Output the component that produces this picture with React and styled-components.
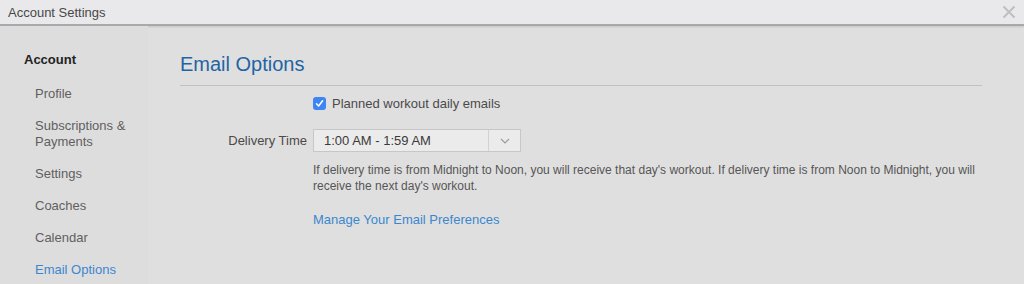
import React, { useState } from 'react';
import styled, { createGlobalStyle } from 'styled-components';

const GlobalStyle = createGlobalStyle`
  html, body {
    margin: 0;
    padding: 0;
    background: #dfdede;
    font-family: "Liberation Sans", Arial, Helvetica, sans-serif;
  }
`;

const Window = styled.div`
  width: 1024px;
  height: 284px;
  overflow: hidden;
  display: flex;
  flex-direction: column;
  background: #e0dfdf;
`;

const TitleBar = styled.div`
  height: 24px;
  flex: 0 0 24px;
  display: flex;
  align-items: center;
  justify-content: space-between;
  padding: 0 8px;
  background: #e9e9eb;
  border-bottom: 2px solid #a9a9ab;
  box-shadow: 0 1px 2px rgba(0, 0, 0, 0.12);
  font-size: 13px;
  color: #484848;
`;

const CloseButton = styled.button`
  border: none;
  background: none;
  padding: 0;
  width: 14px;
  height: 14px;
  display: flex;
  cursor: pointer;
`;

const Body = styled.div`
  flex: 1;
  display: flex;
`;

const Sidebar = styled.nav`
  width: 148px;
  flex: 0 0 148px;
  padding: 26px 0 0 24px;
  box-sizing: border-box;
  background: #dedddd;
`;

const SideHeading = styled.div`
  font-size: 13px;
  font-weight: bold;
  color: #222;
  line-height: 16px;
  margin-bottom: 18px;
`;

const SideItem = styled.div`
  font-size: 13px;
  line-height: 16px;
  padding-left: 11px;
  margin-bottom: 16px;
  color: ${(p) => (p.$active ? '#3a87d0' : '#5f5f5f')};
  cursor: pointer;
`;

const Main = styled.main`
  flex: 1;
  padding: 25px 42px 0 32px;
`;

const Heading = styled.h1`
  margin: 0;
  font-size: 20px;
  font-weight: normal;
  color: #1e64a4;
  line-height: 26px;
  padding-bottom: 8px;
  border-bottom: 1px solid #c2c1c1;
`;

const Form = styled.div`
  display: grid;
  grid-template-columns: 127px 1fr;
  column-gap: 6px;
  padding-top: 9px;
`;

const Label = styled.label`
  font-size: 13px;
  color: #4a4a4a;
  text-align: right;
  align-self: center;
`;

const CheckRow = styled.label`
  grid-column: 2;
  display: flex;
  align-items: center;
  gap: 6px;
  font-size: 13px;
  color: #4a4a4a;
  height: 16px;
  cursor: pointer;
`;

const Box = styled.span`
  width: 13px;
  height: 13px;
  border-radius: 3px;
  background: ${(p) => (p.$checked ? '#3d85f2' : '#fff')};
  border: ${(p) => (p.$checked ? 'none' : '1px solid #aaa')};
  box-sizing: border-box;
  display: flex;
  align-items: center;
  justify-content: center;
`;

const Select = styled.div`
  margin-top: 18px;
  width: 208px;
  height: 23px;
  box-sizing: border-box;
  border: 1px solid #c8c7c7;
  background: #ecebeb;
  display: flex;
  font-size: 13px;
  color: #3a3a3a;
`;

const SelectText = styled.div`
  flex: 1;
  padding-left: 10px;
  display: flex;
  align-items: center;
`;

const SelectArrow = styled.div`
  width: 31px;
  border-left: 1px solid #d3d2d2;
  display: flex;
  align-items: center;
  justify-content: center;
`;

const DelLabel = styled(Label)`
  margin-top: 18px;
`;

const Help = styled.p`
  grid-column: 2;
  margin: 10px 0 0;
  font-size: 12px;
  line-height: 16px;
  color: #565656;
  max-width: 672px;
`;

const Link = styled.a`
  grid-column: 2;
  margin-top: 18px;
  font-size: 13px;
  color: #3a87d0;
  text-decoration: none;
  cursor: pointer;
`;

const items = ['Profile', 'Subscriptions & Payments', 'Settings', 'Coaches', 'Calendar', 'Email Options'];

export default function App() {
  const [checked, setChecked] = useState(true);
  return (
    <>
      <GlobalStyle />
      <Window>
        <TitleBar>
          <span>Account Settings</span>
          <CloseButton aria-label="Close">
            <svg width="14" height="14" viewBox="0 0 14 14">
              <path d="M1.5 1.5 L12.5 12.5 M12.5 1.5 L1.5 12.5" stroke="#bdbdbd" strokeWidth="1.8" />
            </svg>
          </CloseButton>
        </TitleBar>
        <Body>
          <Sidebar>
            <SideHeading>Account</SideHeading>
            {items.map((it) => (
              <SideItem key={it} $active={it === 'Email Options'}>
                {it === 'Subscriptions & Payments' ? (
                  <>
                    Subscriptions &amp;
                    <br />
                    Payments
                  </>
                ) : (
                  it
                )}
              </SideItem>
            ))}
          </Sidebar>
          <Main>
            <Heading>Email Options</Heading>
            <Form>
              <CheckRow onClick={() => setChecked(!checked)}>
                <Box $checked={checked}>
                  {checked && (
                    <svg width="9" height="9" viewBox="0 0 9 9">
                      <path d="M1.5 4.8 L3.6 7 L7.6 1.8" fill="none" stroke="#fff" strokeWidth="1.5" strokeLinecap="round" strokeLinejoin="round" />
                    </svg>
                  )}
                </Box>
                Planned workout daily emails
              </CheckRow>
              <DelLabel>Delivery Time</DelLabel>
              <Select>
                <SelectText>1:00 AM - 1:59 AM</SelectText>
                <SelectArrow>
                  <svg width="10" height="6" viewBox="0 0 10 6">
                    <path d="M1 1 L5 5 L9 1" fill="none" stroke="#9a9a9a" strokeWidth="1.1" />
                  </svg>
                </SelectArrow>
              </Select>
              <Help>
                If delivery time is from Midnight to Noon, you will receive that day's workout. If delivery time is from Noon to Midnight, you will receive the next day's workout.
              </Help>
              <Link>Manage Your Email Preferences</Link>
            </Form>
          </Main>
        </Body>
      </Window>
    </>
  );
}
